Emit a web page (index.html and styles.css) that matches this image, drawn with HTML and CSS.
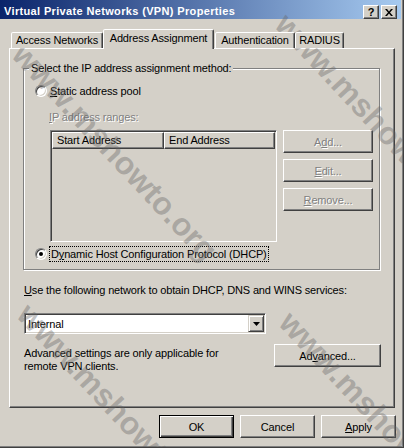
FILE: index.html
```html
<!DOCTYPE html>
<html>
<head>
<meta charset="utf-8">
<title>VPN Properties</title>
<link rel="stylesheet" href="styles.css">
</head>
<body>
<div class="window">
  <div class="titlebar">
    <span class="title">Virtual Private Networks (VPN) Properties</span>
    <div class="caps">
      <span class="cap cap-help">?</span>
      <span class="cap cap-close"><svg width="8" height="7" viewBox="0 0 8 7"><path d="M0 0h2l2 2.5L6 0h2L5 3.5 8 7H6L4 4.5 2 7H0l3-3.5z" fill="#000"/></svg></span>
    </div>
  </div>

  <div class="tabs">
    <div class="tab tab-access">Access Networks</div>
    <div class="tab tab-address selected">Address Assignment</div>
    <div class="tab tab-auth">Authentication</div>
    <div class="tab tab-radius">RADIUS</div>
  </div>

  <div class="panel">
    <div class="group">
      <span class="legend">Select the IP address assignment method:</span>
      <div class="radio-row">
        <span class="radio"></span>
        <span class="radio-label"><u>S</u>tatic address pool</span>
      </div>
      <div class="ranges-label disabled"><u>I</u>P address ranges:</div>
      <div class="ranges">
        <div class="list">
          <div class="list-head">
            <span class="col col-start">Start Address</span>
            <span class="col col-end">End Address</span>
          </div>
        </div>
        <div class="side-buttons">
          <div class="btn disabled">A<u>d</u>d...</div>
          <div class="btn disabled"><u>E</u>dit...</div>
          <div class="btn disabled"><u>R</u>emove...</div>
        </div>
      </div>
      <div class="radio-row dhcp">
        <span class="radio checked"></span>
        <span class="radio-label focus">D<u>y</u>namic Host Configuration Protocol (DHCP)</span>
      </div>
    </div>

    <div class="network-label"><u>U</u>se the following network to obtain DHCP, DNS and WINS services:</div>
    <div class="combo">
      <span class="combo-value">Internal</span>
      <span class="combo-arrow"><svg width="7" height="4" viewBox="0 0 7 4"><path d="M0 0h7L3.5 4z" fill="#000"/></svg></span>
    </div>
    <div class="adv-row">
      <p class="adv-text">Advanced settings are only applicable for<br>remote VPN clients.</p>
      <div class="btn btn-adv">Ad<u>v</u>anced...</div>
    </div>
  </div>

  <div class="footer">
    <div class="btn btn-foot default">OK</div>
    <div class="btn btn-foot">Cancel</div>
    <div class="btn btn-foot"><u>A</u>pply</div>
  </div>

  <div class="watermark" aria-hidden="true">
    <span class="wm wm-1">www.mshowto.org</span>
    <span class="wm wm-2">www.mshowto.org</span>
    <span class="wm wm-3">www.mshowto.org</span>
    <span class="wm wm-4">www.mshowto.org</span>
  </div>
</div>
</body>
</html>
```

FILE: styles.css
```css
* { box-sizing: border-box; }
html, body { margin: 0; padding: 0; }
body {
  width: 404px;
  height: 448px;
  overflow: hidden;
  background: #d4d0c8;
  font-family: "Liberation Sans", Arial, sans-serif;
  font-size: 11px;
  letter-spacing: -0.15px;
  color: #000;
}
u { text-decoration: underline; text-underline-offset: 1px; }

.window {
  position: relative;
  width: 404px;
  height: 448px;
  overflow: hidden;
  background: #d4d0c8;
  border-right: 1px solid #404040;
  border-bottom: 1px solid #404040;
  box-shadow: inset -1px -1px #808080;
}

/* title bar */
.titlebar {
  display: flex;
  justify-content: space-between;
  align-items: flex-start;
  height: 19px;
  margin-right: 2px;
  padding: 3px 4px 0 4px;
  background: linear-gradient(to right, #0a246a, #a6caf0);
}
.title {
  color: #fff;
  font-weight: bold;
  line-height: 16px;
  letter-spacing: 0.35px;
  white-space: nowrap;
}
.caps { display: flex; gap: 2px; margin-top: 2px; }
.cap {
  display: flex;
  align-items: center;
  justify-content: center;
  width: 16px;
  height: 14px;
  background: #d4d0c8;
  border: 1px solid;
  border-color: #fff #404040 #404040 #fff;
  box-shadow: inset -1px -1px #808080;
  font-weight: bold;
  font-size: 11px;
  line-height: 12px;
  letter-spacing: 0;
}

/* tabs */
.tabs {
  position: relative;
  z-index: 1;
  display: flex;
  align-items: flex-end;
  height: 19px;
  margin: 10px 0 0 11px;
}
.tab {
  height: 16px;
  line-height: 14px;
  text-align: center;
  white-space: nowrap;
  background: #d4d0c8;
  border: 1px solid;
  border-bottom: none;
  border-color: #fff #404040 transparent #fff;
  border-radius: 2px 2px 0 0;
  box-shadow: inset -1px 0 #808080;
}
.tab-access { width: 92px; }
.tab-address { width: 111px; }
.tab-auth { width: 80px; margin-left: 1px; }
.tab-radius { width: 49px; }
.tab.selected {
  height: 20px;
  margin-bottom: -1px;
  line-height: 16px;
}

/* panel */
.panel {
  width: 386px;
  height: 360px;
  margin-left: 9px;
  padding: 19px 13px 0 14px;
  border: 1px solid;
  border-color: #fff #404040 #404040 #fff;
  box-shadow: inset -1px -1px #808080;
}

.group {
  position: relative;
  width: 357px;
  height: 202px;
  margin-left: -1px;
  padding: 15px 0 0 11px;
  border: 1px solid #808080;
  box-shadow: 1px 1px #fff, inset 1px 1px #fff;
}
.legend {
  position: absolute;
  left: 5px;
  top: -7px;
  padding: 0 2px;
  line-height: 13px;
  background: #d4d0c8;
  white-space: nowrap;
}

.radio-row {
  display: flex;
  align-items: center;
  gap: 3px;
  height: 14px;
  line-height: 14px;
}
.radio {
  position: relative;
  flex: none;
  width: 12px;
  height: 12px;
  border-radius: 50%;
  background: #fff;
  border: 1px solid;
  border-color: #808080 #fff #fff #808080;
  box-shadow: inset 1px 1px #404040, inset -1px -1px #d4d0c8;
}
.radio.checked::after {
  content: "";
  position: absolute;
  left: 3px;
  top: 3px;
  width: 4px;
  height: 4px;
  border-radius: 50%;
  background: #000;
}
.dhcp {
  height: 16px;
  margin-top: 4px;
  gap: 2px;
}
.focus {
  border: 1px dotted #000;
  padding: 0 1px;
  line-height: 14px;
}

.disabled { color: #808080; text-shadow: 1px 1px #fff; }

.ranges-label {
  margin: 12px 0 0 14px;
  line-height: 14px;
}

.ranges {
  display: flex;
  margin: 6px 0 0 15px;
}
.list {
  width: 227px;
  height: 112px;
  padding: 1px;
  border: 1px solid;
  border-color: #808080 #fff #fff #808080;
  box-shadow: inset 1px 1px #404040, inset -1px -1px #d4d0c8;
}
.list-head { display: flex; height: 17px; }
.col {
  height: 17px;
  padding-left: 4px;
  line-height: 14px;
  border: 1px solid;
  border-color: #fff #404040 #404040 #fff;
  box-shadow: inset -1px -1px #808080;
}
.col-start { width: 112px; }
.col-end { width: 111px; }

.side-buttons {
  display: flex;
  flex-direction: column;
  gap: 6px;
  margin-left: 6px;
}

.btn {
  display: flex;
  align-items: center;
  justify-content: center;
  height: 23px;
  width: 90px;
  background: #d4d0c8;
  border: 1px solid;
  border-color: #fff #404040 #404040 #fff;
  box-shadow: inset -1px -1px #808080;
  white-space: nowrap;
}

.network-label {
  margin: 13px 0 0 0;
  line-height: 14px;
  white-space: nowrap;
}

.combo {
  display: flex;
  align-items: center;
  justify-content: space-between;
  width: 242px;
  height: 21px;
  margin-top: 16px;
  padding: 1px 1px 1px 3px;
  background: #fff;
  border: 1px solid;
  border-color: #808080 #fff #fff #808080;
  box-shadow: inset 1px 1px #404040, inset -1px -1px #d4d0c8;
}
.combo-value { line-height: 14px; }
.combo-arrow {
  display: flex;
  align-items: center;
  justify-content: center;
  width: 16px;
  height: 17px;
  background: #d4d0c8;
  border: 1px solid;
  border-color: #d4d0c8 #404040 #404040 #d4d0c8;
  box-shadow: inset 1px 1px #fff, inset -1px -1px #808080;
}

.adv-row {
  display: flex;
  justify-content: space-between;
  align-items: flex-start;
  margin-top: 10px;
}
.adv-text {
  margin: 3px 0 0 0;
  line-height: 13px;
}
.btn-adv { width: 107px; }

.footer {
  display: flex;
  justify-content: flex-end;
  gap: 6px;
  margin-top: 7px;
  padding-right: 7px;
}
.btn-foot { width: 75px; }
.btn.default {
  border-color: #000;
  box-shadow: inset 1px 1px #fff, inset -1px -1px #404040, inset -2px -2px #808080;
}

/* watermark overlay */
.watermark {
  position: absolute;
  inset: 0;
  pointer-events: none;
  overflow: hidden;
}
.wm {
  position: absolute;
  font-family: "Liberation Sans", Arial, sans-serif;
  font-weight: bold;
  font-size: 32px;
  line-height: 32px;
  letter-spacing: 0;
  color: rgba(100, 100, 100, 0.38);
  white-space: nowrap;
  transform: translate(-50%, -50%) rotate(47deg);
}
.wm-1 { left: 115px; top: 152px; }
.wm-2 { left: 378px; top: 122px; }
.wm-3 { left: 120px; top: 412px; }
.wm-4 { left: 382px; top: 420px; }
```
